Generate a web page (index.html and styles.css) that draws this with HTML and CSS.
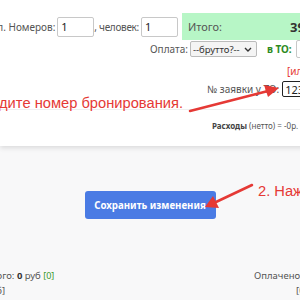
FILE: index.html
```html
<!DOCTYPE html>
<html lang="ru">
<head>
  <meta charset="UTF-8">
  <title>Бронирование</title>
  <link rel="stylesheet" href="styles.css">
</head>
<body>
  <div class="order-card">
    <div class="row row-totals">
      <div class="counts">
        <span>Кол. Номеров:</span>
        <input class="num-input" type="text" value="1">
        <span class="sep">, человек:</span>
        <input class="num-input" type="text" value="1">
      </div>
      <div class="total-box">
        <span class="total-label">Итого:</span>
        <strong class="total-sum">39 900 руб</strong>
      </div>
    </div>

    <div class="row row-payment">
      <span>Оплата:</span>
      <span class="select-wrap">
        <select class="pay-select">
          <option>--брутто?--</option>
        </select>
        <svg class="chevron" width="8" height="5" viewBox="0 0 8 5">
          <path d="M1 1l3 3 3-3" fill="none" stroke="#333" stroke-width="1.4"/>
        </svg>
      </span>
      <span class="to-label">в ТО:</span>
      <input class="to-input" type="text" value="0">
    </div>

    <div class="row row-hint">
      <span class="hint">[или укажите сумму]</span>
    </div>

    <div class="row row-order">
      <span>№ заявки у ТО:</span>
      <input class="order-input" type="text" value="12345">
    </div>

    <div class="expenses">
      <b>Расходы</b> (нетто) = -0р. (комиссия 0р.)
    </div>

    <div class="note note-1">1. Введите номер бронирования.</div>
    <svg class="arrow" width="300" height="146" viewBox="0 0 300 146">
      <line x1="190" y1="111" x2="268" y2="91" stroke="#e53935" stroke-width="2.5" stroke-linecap="round"/>
      <polygon points="279,88 264,85 268,97" fill="#e53935"/>
    </svg>
  </div>

  <div class="actions">
    <button class="save-button">Сохранить изменения</button>
    <div class="note note-2">2. Нажмите</div>
    <svg class="arrow" width="300" height="110" viewBox="0 0 300 110">
      <line x1="252" y1="39" x2="216" y2="56" stroke="#e53935" stroke-width="2.5" stroke-linecap="round"/>
      <polygon points="205,61 213,50 219,62" fill="#e53935"/>
    </svg>
  </div>

  <div class="summary">
    <div class="summary-left">
      <div>Итого: <b>0</b> руб <span class="paid-count">[0]</span></div>
      <div class="sub-line">[0 руб]</div>
    </div>
    <div class="summary-right">
      <div>Оплачено туристом:</div>
      <div class="sub-line">[0 руб]</div>
    </div>
  </div>
</body>
</html>
```

FILE: styles.css
```css
* {
  margin: 0;
  padding: 0;
  box-sizing: border-box;
}

body {
  width: 300px;
  height: 300px;
  overflow: hidden;
  background: #f8f8f9;
  font-family: "Noto Sans", sans-serif;
  font-size: 10px;
  color: #555;
}

input, select, button {
  font-family: inherit;
}

.order-card {
  position: relative;
  width: 340px;
  height: 146px;
  background: #fff;
  box-shadow: 0 2px 5px rgba(0, 0, 0, 0.12);
  padding-top: 13px;
}

.row {
  display: flex;
  align-items: center;
  white-space: nowrap;
}

.row > * {
  flex-shrink: 0;
}

.row-totals {
  justify-content: flex-end;
  height: 27px;
}

.counts {
  display: flex;
  align-items: center;
  margin-right: 4px;
}

.sep {
  letter-spacing: -0.3px;
}

.num-input {
  width: 37px;
  height: 20px;
  margin-left: 2px;
  border: 1px solid #c8c8c8;
  border-radius: 2px;
  padding: 0 3px;
  font-size: 11px;
  color: #222;
}

.total-box {
  display: flex;
  align-items: center;
  width: 158px;
  height: 27px;
  background: #b7f6c6;
  padding-left: 6px;
  font-size: 11px;
  overflow: hidden;
}

.total-box > * {
  flex-shrink: 0;
}

.total-label {
  width: 102px;
}

.total-sum {
  font-size: 13px;
  color: #333;
}

.row-payment {
  height: 16px;
  margin-top: 1px;
  padding-left: 150px;
}

.select-wrap {
  position: relative;
  display: flex;
  margin: 0 10px 0 2px;
}

.pay-select {
  appearance: none;
  width: 67px;
  height: 16px;
  padding: 0 12px 0 2px;
  font-size: 9.5px;
  color: #333;
  border: 1px solid #bbb;
  border-radius: 2px;
  background: #f4f4f4;
}

.chevron {
  position: absolute;
  right: 5px;
  top: 6px;
}

.to-label {
  color: #2e8b1e;
  font-weight: bold;
}

.to-input {
  width: 50px;
  height: 18px;
  margin-left: 4px;
  border: 1px solid #c8c8c8;
  border-radius: 2px;
  padding: 0 3px;
  font-size: 11px;
  color: #222;
}

.row-hint {
  padding-left: 287px;
  height: 20px;
  margin-top: 4px;
}

.hint {
  color: #e53935;
}

.row-order {
  padding-left: 207px;
  height: 16px;
}

.order-input {
  width: 60px;
  height: 16px;
  margin-left: 3px;
  border: 1.5px solid #222;
  border-radius: 2px;
  padding: 0 2px;
  font-size: 11px;
  color: #222;
}

.expenses {
  margin-top: 12px;
  border-top: 1px solid #f0f0f0;
  padding: 10px 0 0 212px;
  font-size: 8px;
  white-space: nowrap;
}

.expenses b {
  color: #444;
}

.note {
  position: absolute;
  font-family: "Liberation Sans", Arial, sans-serif;
  font-size: 14.7px;
  color: #e53935;
  white-space: nowrap;
}

.note-1 {
  right: 157px;
  top: 95px;
}

.note-2 {
  left: 258px;
  top: 37px;
}

.arrow {
  position: absolute;
  left: 0;
  top: 0;
  pointer-events: none;
}

.actions {
  position: relative;
  height: 122px;
  padding-top: 45px;
  text-align: center;
}

.save-button {
  width: 131px;
  height: 28px;
  background: #4a7be4;
  color: #fff;
  border: none;
  border-radius: 3px;
  font-size: 9.7px;
  font-weight: bold;
}

.summary {
  display: flex;
  justify-content: space-between;
  width: 340px;
  font-size: 9.5px;
  line-height: 15px;
  white-space: nowrap;
}

.summary-left {
  margin-left: -15px;
}

.summary-left .sub-line {
  margin-left: -10px;
}

.summary-left b {
  color: #333;
}

.paid-count {
  color: #3a9a2a;
  font-size: 9px;
}

.summary-right {
  width: 86px;
}

.summary-right .sub-line {
  padding-left: 42px;
}
```
